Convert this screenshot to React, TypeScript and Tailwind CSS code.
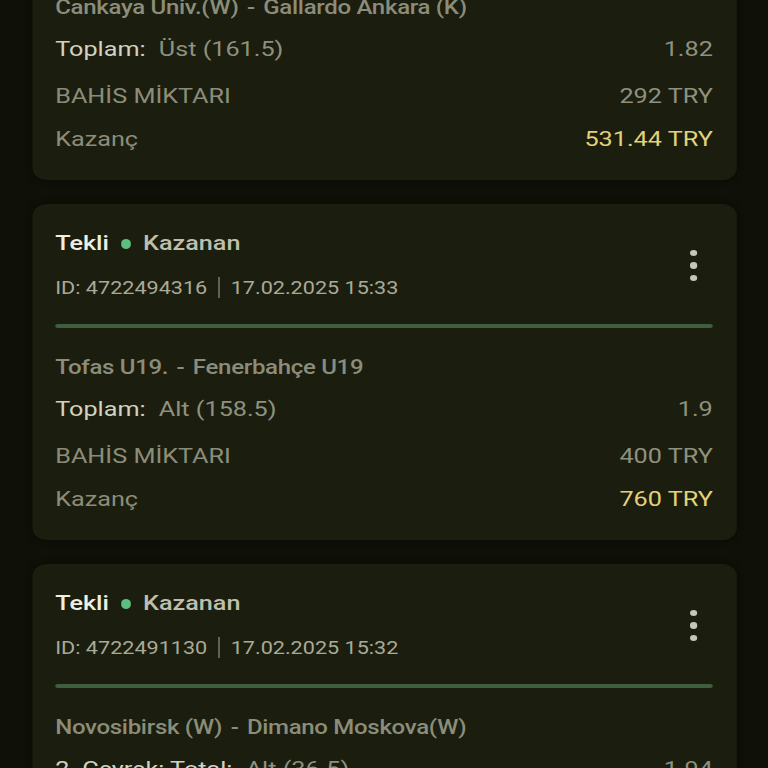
import React from "react";

// --- bet slip rows (the list is scrolled, first card is partly off screen) ---
type Bet = {
  id: string;
  date: string;
  home: string;
  away: string;
  market: string;
  pick: string;
  odds: string;
  stake: string;
  win: string;
};

const bets: Bet[] = [
  {
    id: "4722497805",
    date: "17.02.2025 15:34",
    home: "Cankaya Univ.(W)",
    away: "Gallardo Ankara (K)",
    market: "Toplam:",
    pick: "Üst (161.5)",
    odds: "1.82",
    stake: "292 TRY",
    win: "531.44 TRY",
  },
  {
    id: "4722494316",
    date: "17.02.2025 15:33",
    home: "Tofas U19.",
    away: "Fenerbahçe U19",
    market: "Toplam:",
    pick: "Alt (158.5)",
    odds: "1.9",
    stake: "400 TRY",
    win: "760 TRY",
  },
  {
    id: "4722491130",
    date: "17.02.2025 15:32",
    home: "Novosibirsk (W)",
    away: "Dimano Moskova(W)",
    market: "2. Çeyrek: Total:",
    pick: "Alt (36.5)",
    odds: "1.94",
    stake: "300 TRY",
    win: "582 TRY",
  },
];

function MoreDots() {
  return (
    <div className="flex w-8 flex-col items-center gap-[6px]">
      <span className="h-[6.5px] w-[5.5px] rounded-full bg-[#c6c7b6]" />
      <span className="h-[6.5px] w-[5.5px] rounded-full bg-[#c6c7b6]" />
      <span className="h-[6.5px] w-[5.5px] rounded-full bg-[#c6c7b6]" />
    </div>
  );
}

function BetCard({ bet }: { bet: Bet }) {
  return (
    <div className="rounded-[12px] bg-[#1b1e0e] pb-6 pl-[19px] pr-5 pt-6 shadow-[0_0_6px_rgba(0,0,0,0.5)]">
      <div className="flex items-center justify-between">
        <div>
          <div className="flex h-8 items-center text-[21px] font-medium">
            <span className="text-[#efeee0]">Tekli</span>
            <span className="ml-[10px] mr-[10px] h-[10px] w-[8.5px] rounded-full bg-[#5cbf80]" />
            <span className="text-[#bdbead]">Kazanan</span>
          </div>
          <div className="mt-[11px] flex h-8 items-center text-[18px] text-[#a9aa98]">
            <span>ID: {bet.id}</span>
            <span className="mx-[9px] h-[21px] w-[1.5px] bg-[#8f9080]" />
            <span>{bet.date}</span>
          </div>
        </div>
        <MoreDots />
      </div>

      <div className="mt-[21px] h-[4px] rounded-full bg-[#3e5e3d]" />

      <div className="mt-[23px] flex h-8 items-center text-[20px] font-medium tracking-[-0.25px] text-[#8b8d7a]">
        <span>{bet.home}</span>
        <span className="mx-[7px]">-</span>
        <span>{bet.away}</span>
      </div>

      <div className="mt-[11px] flex h-8 items-center justify-between text-[21px]">
        <div className="flex items-center">
          <span className="text-[#d2d2c2]">{bet.market}</span>
          <span className="ml-[11px] text-[#8f917f]">{bet.pick}</span>
        </div>
        <span className="text-[#8f917f]">{bet.odds}</span>
      </div>

      <div className="mt-[15px] flex h-8 items-center justify-between text-[21px] text-[#8b8d7b]">
        <span>BAHİS MİKTARI</span>
        <span className="text-[#8f917f]">{bet.stake}</span>
      </div>

      <div className="mt-[11px] flex h-8 items-center justify-between text-[21px]">
        <span className="text-[#8b8d7b]">Kazanç</span>
        <span className="text-[#e3d277]">{bet.win}</span>
      </div>
    </div>
  );
}

export default function App() {
  return (
    <div className="h-[768px] w-[768px] overflow-hidden bg-[#0f1108] font-[family-name:Roboto,sans-serif]">
      {/* screenshot is stretched sideways, so the column is drawn narrow and widened */}
      <div className="-mt-[156px] w-[640px] origin-top-left scale-x-[1.2] px-[27px]">
        <div className="flex w-[587px] flex-col gap-6">
          {bets.map((b) => (
            <BetCard key={b.id} bet={b} />
          ))}
        </div>
      </div>
    </div>
  );
}
